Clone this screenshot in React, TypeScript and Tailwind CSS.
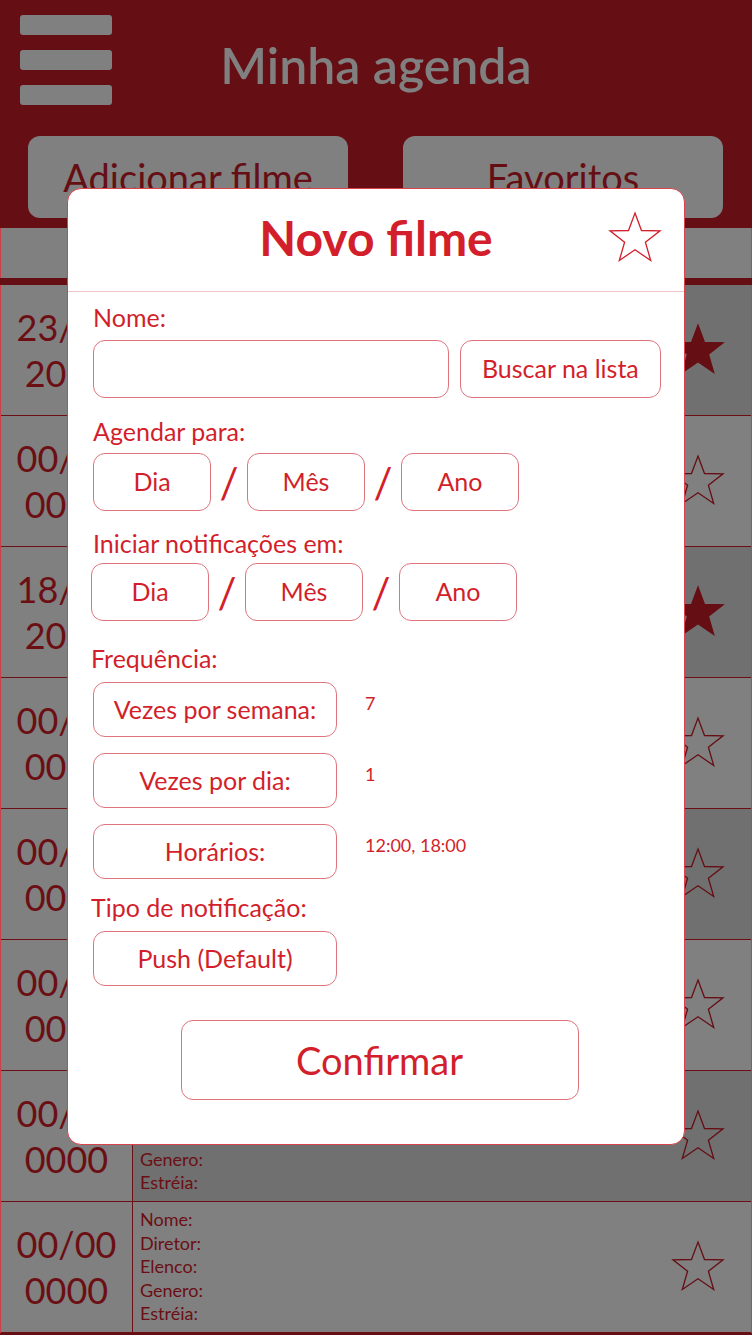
import React from 'react';

const DARK = '#650f14';

// Simple 5-point star, outline or filled
const Star = ({ filled, color, size = 54 }: { filled?: boolean; color: string; size?: number }) => (
  <svg width={size} height={size} viewBox="0 0 54 54">
    <polygon
      points="27,2 33.5,19.5 52,19.8 37.4,31.2 42.7,49.5 27,38.8 11.3,49.5 16.6,31.2 2,19.8 20.5,19.5"
      fill={filled ? color : 'none'}
      stroke={color}
      strokeWidth="1.3"
      strokeLinejoin="miter"
    />
  </svg>
);

type Row = { day: string; year: string; fav: boolean };

const rows: Row[] = [
  { day: '23/05', year: '2019', fav: true },
  { day: '00/00', year: '0000', fav: false },
  { day: '18/06', year: '2019', fav: true },
  { day: '00/00', year: '0000', fav: false },
  { day: '00/00', year: '0000', fav: false },
  { day: '00/00', year: '0000', fav: false },
  { day: '00/00', year: '0000', fav: false },
  { day: '00/00', year: '0000', fav: false },
];

const Box = ({ children, className = '' }: { children?: React.ReactNode; className?: string }) => (
  <div
    className={`flex items-center justify-center rounded-[12px] border-[1.5px] border-[#e0747c] text-[#d21f2b] ${className}`}
  >
    {children}
  </div>
);

const Slash = () => (
  <span className="w-[36px] text-center text-[42px] leading-none text-[#d21f2b]">/</span>
);

const DateRow = ({ className = '' }: { className?: string }) => (
  <div className={`flex items-center ${className}`}>
    <Box className="w-[118px] h-[58px] text-[25px]">Dia</Box>
    <Slash />
    <Box className="w-[118px] h-[58px] text-[25px]">Mês</Box>
    <Slash />
    <Box className="w-[118px] h-[58px] text-[25px]">Ano</Box>
  </div>
);

const FreqRow = ({ label, value }: { label: string; value?: string }) => (
  <div className="flex items-start">
    <Box className="w-[244px] h-[55px] text-[25px]">{label}</Box>
    {value && <span className="ml-[28px] mt-[12px] text-[18px] leading-none text-[#d21f2b]">{value}</span>}
  </div>
);

export default function App() {
  return (
    <div
      className="relative w-[752px] h-[1335px] overflow-hidden bg-[#650f14]"
      style={{ fontFamily: 'Lato, "Open Sans", sans-serif' }}
    >
      {/* header */}
      <div className="h-[228px] flex flex-col">
        <div className="flex items-start pt-[15px] pl-[20px] pr-[20px]">
          <div className="flex flex-col gap-[15px] w-[92px]">
            <div className="h-[20px] rounded-[3px] bg-[#808080]" />
            <div className="h-[20px] rounded-[3px] bg-[#808080]" />
            <div className="h-[20px] rounded-[3px] bg-[#808080]" />
          </div>
          <div className="flex-1 text-center text-[50px] font-semibold text-[#808080] leading-none mt-[25px]">
            Minha agenda
          </div>
          <div className="w-[92px]" />
        </div>
        <div className="flex gap-[55px] pl-[28px] mt-[31px]">
          <div className="w-[320px] h-[82px] rounded-[12px] bg-[#808080] flex justify-center pt-[22px] text-[38px] leading-none text-[#650f14]">
            Adicionar filme
          </div>
          <div className="w-[320px] h-[82px] rounded-[12px] bg-[#808080] flex justify-center pt-[22px] text-[38px] leading-none text-[#650f14]">
            Favoritos
          </div>
        </div>
      </div>

      {/* column header bar */}
      <div className="h-[50px] bg-[#808080] border-x border-[#c8404a]" />
      <div className="h-[7px] bg-[#650f14]" />

      {/* list */}
      <div className="border-x border-[#c8404a]">
        {rows.map((r, i) => (
          <div key={i} className="flex h-[131px] border-b-[1.5px] border-[#6b1016]">
            <div className="w-[132px] shrink-0 bg-[#808080] border-r-[1.5px] border-[#6b1016] flex flex-col items-center justify-center text-[36px] leading-[46px] text-[#6b0f14]">
              <span>{r.day}</span>
              <span>{r.year}</span>
            </div>
            <div
              className={`flex-1 flex items-center justify-between pl-[7px] pr-[26px] ${
                i % 2 === 0 ? 'bg-[#707070]' : 'bg-[#808080]'
              }`}
            >
              <div className="flex flex-col text-[18px] leading-[23.5px] text-[#6b0f14]">
                <span>Nome:</span>
                <span>Diretor:</span>
                <span>Elenco:</span>
                <span>Genero:</span>
                <span>Estréia:</span>
              </div>
              <Star filled={r.fav} color={DARK} />
            </div>
          </div>
        ))}
      </div>

      {/* modal */}
      <div className="absolute left-[67px] top-[188px] w-[618px] h-[957px] bg-white rounded-[14px] border border-[#d9434d] flex flex-col">
        <div className="relative h-[103px] border-b border-[#f0c4c7] flex items-center justify-center">
          <span className="text-[48px] font-bold text-[#d21f2b] leading-none mb-[4px]">Novo filme</span>
          <div className="absolute right-[22px] top-[22px]">
            <Star color="#d21f2b" />
          </div>
        </div>

        <div className="flex flex-col pl-[25px] pr-[23px] text-[#d21f2b]">
          <div className="mt-[13px] text-[25px] leading-none">Nome:</div>
          <div className="flex gap-[11px] mt-[10px]">
            <Box className="w-[357px] h-[58px]" />
            <Box className="w-[202px] h-[58px] text-[25px]">Buscar na lista</Box>
          </div>

          <div className="mt-[21px] text-[25px] leading-none">Agendar para:</div>
          <DateRow className="mt-[9px]" />

          <div className="mt-[20px] text-[25px] leading-none">Iniciar notificações em:</div>
          <DateRow className="mt-[7px] -ml-[2px]" />

          <div className="mt-[25px] -ml-[2px] text-[25px] leading-none">Frequência:</div>
          <div className="flex flex-col gap-[16px] mt-[11px]">
            <FreqRow label="Vezes por semana:" value="7" />
            <FreqRow label="Vezes por dia:" value="1" />
            <FreqRow label="Horários:" value="12:00, 18:00" />
          </div>

          <div className="mt-[16px] -ml-[2px] text-[25px] leading-none">Tipo de notificação:</div>
          <div className="mt-[11px]">
            <Box className="w-[244px] h-[55px] text-[25px]">Push (Default)</Box>
          </div>

          <div className="flex justify-center mt-[34px] pl-[5px]">
            <Box className="w-[398px] h-[80px] text-[38px]">Confirmar</Box>
          </div>
        </div>
      </div>
    </div>
  );
}
